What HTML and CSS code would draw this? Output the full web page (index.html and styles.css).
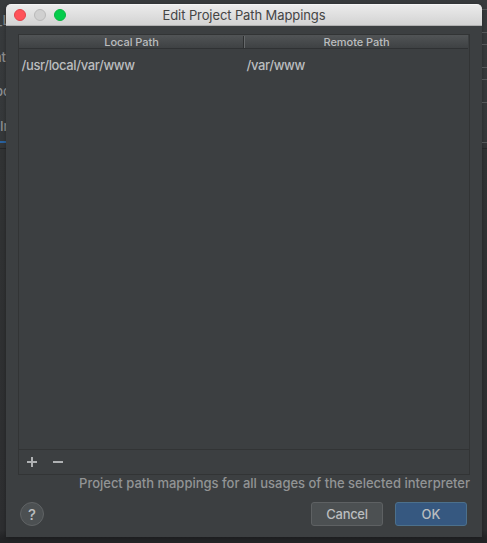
FILE: index.html
```html
<!DOCTYPE html>
<html lang="en">
<head>
<meta charset="utf-8">
<title>Edit Project Path Mappings</title>
<link rel="stylesheet" href="styles.css">
</head>
<body>
<div class="desktop">
  <div class="behind behind-left">
    <span class="frag frag-l">_L</span>
    <span class="frag frag-at">at</span>
    <span class="frag frag-po">po</span>
    <span class="frag frag-in">In</span>
    <i class="tab-line"></i>
    <i class="panel-line"></i>
  </div>
  <main class="dialog">
    <header class="titlebar">
      <div class="lights"><i class="light red"></i><i class="light gray"></i><i class="light green"></i></div>
      <h1 class="title">Edit Project Path Mappings</h1>
    </header>
    <section class="table">
      <div class="row head"><div class="cell"><span>Local Path</span></div><div class="cell"><span>Remote Path</span></div></div>
      <div class="row data"><div>/usr/local/var/www</div><div>/var/www</div></div>
      <div class="toolbar">
        <svg width="10" height="10" viewBox="0 0 10 10"><path d="M0 5h10M5 0v10" stroke="#afb1b3" stroke-width="2"/></svg>
        <svg width="10" height="10" viewBox="0 0 10 10"><path d="M0 5h10" stroke="#afb1b3" stroke-width="2"/></svg>
      </div>
    </section>
    <p class="note">Project path mappings for all usages of the selected interpreter</p>
    <footer class="actions">
      <button class="help">?</button>
      <button class="btn cancel">Cancel</button>
      <button class="btn primary">OK</button>
    </footer>
  </main>
  <div class="behind behind-right"></div>
</div>
</body>
</html>
```
FILE: styles.css
```css
* { box-sizing: border-box; }
body { margin: 0; font-family: Inter, "Liberation Sans", sans-serif; font-size: 13px; font-weight: 450; color: #bbbdbf; background: #29292b; }
.desktop { width: 487px; height: 543px; overflow: hidden; padding-top: 4px; display: grid; grid-template-columns: 6px 476px 5px; grid-template-rows: 533px; background: linear-gradient(#383b3d 0, #35383a 140px, #313334 150px, #2d2e30 530px, #232426 538px); }
.behind { position: relative; }
.behind-left { overflow: hidden; }
.frag { position: absolute; line-height: 16px; color: #8e9091; }
.frag-l { top: 8px; left: -4px; color: #85888a; }
.frag-at { top: 45px; right: 0; }
.frag-po { top: 79px; left: -5px; }
.frag-in { top: 114px; left: 0; }
.tab-line { position: absolute; left: 0; right: 0; top: 137px; height: 2px; background: #2a629f; }
.panel-line { position: absolute; left: 0; right: 0; top: 144px; height: 1px; background: #252628; }
.behind-right { background:
  linear-gradient(#555759, #555759) 0 5px / 5px 1px no-repeat,
  linear-gradient(#555759, #555759) 0 28px / 5px 1px no-repeat,
  linear-gradient(#555759, #555759) 0 40px / 5px 1px no-repeat,
  linear-gradient(#555759, #555759) 0 63px / 5px 1px no-repeat,
  linear-gradient(#555759, #555759) 0 75px / 5px 1px no-repeat,
  linear-gradient(#555759, #555759) 0 98px / 5px 1px no-repeat,
  linear-gradient(#555759, #555759) 0 138px / 5px 1px no-repeat,
  linear-gradient(#252628, #252628) 0 144px / 5px 1px no-repeat; }
.dialog { position: relative; display: flex; flex-direction: column; background: #3c3f41; border-radius: 5px 5px 0 0; box-shadow: 0 1px 4px rgba(0,0,0,.3); }
.titlebar { height: 22px; flex: none; display: grid; grid-template-columns: 70px 1fr 70px; align-items: center; background: linear-gradient(#ebebeb, #d3d3d3); border-bottom: 1px solid #b1b1b1; border-top: 1px solid #f5f5f5; border-radius: 5px 5px 0 0; }
.lights { display: flex; gap: 8px; padding-left: 8px; }
.light { width: 12px; height: 12px; border-radius: 50%; border: 1px solid; }
.red { background: #ff5259; border-color: #e2444b; }
.gray { background: #d0d0d0; border-color: #bababa; }
.green { background: #05cd4c; border-color: #0bb644; }
.title { margin: 0; font-size: 13px; line-height: 16px; font-weight: 400; text-align: center; color: #454545; letter-spacing: -.1px; white-space: nowrap; }
.table { margin: 8px 12px 0; height: 441px; border: 1px solid #323435; display: flex; flex-direction: column; }
.row { display: grid; grid-template-columns: 225px 1fr; }
.head { height: 14px; flex: none; margin-right: 1px; background: linear-gradient(#515456, #3e4143); border-bottom: 1px solid #2f3133; font-size: 11px; line-height: 14px; text-align: center; letter-spacing: -.04px; }
.cell + .cell { border-left: 1px solid #66696b; box-shadow: -1px 0 #2d2f30; height: 12px; margin-top: 1px; line-height: 12px; }
.data { padding: 7px 2.5px; line-height: 18px; letter-spacing: -.37px; }
.toolbar { margin-top: auto; height: 25px; border-top: 1px solid #323435; display: flex; align-items: center; gap: 16px; padding-left: 8px; }
.note { margin: 0 12px; line-height: 16px; text-align: right; color: #929495; white-space: nowrap; letter-spacing: -.01px; }
.actions { display: flex; align-items: center; margin: 11px 15px 0 14px; height: 24px; gap: 12px; }
button { font: inherit; color: #bbbdbf; padding: 0; }
.help { width: 24px; height: 24px; border-radius: 50%; border: 1px solid #606365; background: #4c5052; margin-right: auto; font-size: 15px; font-weight: 500; }
.btn { width: 72px; height: 24px; border: 1px solid #5e6163; border-radius: 3px; background: #4c5052; }
.cancel { letter-spacing: -.3px; }
.primary { background: #365880; border-color: #4c708c; }
```
